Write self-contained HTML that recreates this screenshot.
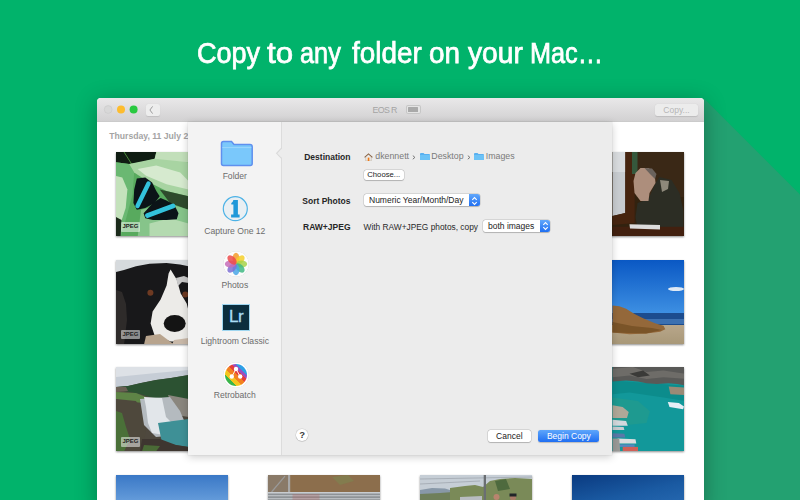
<!DOCTYPE html>
<html><head><meta charset="utf-8">
<style>
*{margin:0;padding:0;box-sizing:border-box}
html,body{width:800px;height:500px;overflow:hidden}
body{position:relative;background:#01b36b;font-family:"Liberation Sans",sans-serif}
.abs{position:absolute}
#shadow{position:absolute;left:0;top:0;width:800px;height:500px}
#title{position:absolute;left:0;top:33.1px;width:800px;height:40px;color:#fff;font-size:29.5px;line-height:40px;white-space:nowrap;-webkit-text-stroke:.75px #fff}
#title span{position:absolute;top:0;transform-origin:0 0}
#win{position:absolute;left:96.5px;top:98px;width:607px;height:410px;background:#fff;border-radius:4px 4px 0 0;overflow:hidden;box-shadow:0 4px 22px rgba(0,0,0,.3)}
#tb{position:absolute;left:0.5px;top:0;width:606.5px;height:24px;background:linear-gradient(#e9e8e9,#d2d1d2);border-bottom:1px solid #cbcbcb}
.tl{position:absolute;top:7.5px;width:8px;height:8px;border-radius:50%}
#date{position:absolute;left:109.3px;top:130.8px;font-size:8.65px;font-weight:bold;color:#a4a4a4;white-space:nowrap}
.ph{position:absolute;width:112.8px;height:84.4px;box-shadow:0 .5px 2px rgba(0,0,0,.45);overflow:hidden}
.ph svg{position:absolute;left:0;top:0;width:113px;height:84.5px;filter:blur(.6px)}
.badge{position:absolute;left:5.2px;top:70.2px;width:19.4px;height:9.6px;background:rgba(255,255,255,.5);border-radius:1px;color:#222;font-size:6px;line-height:9.6px;text-align:center;font-weight:bold}
#pop{position:absolute;left:187.5px;top:122px;width:424.3px;height:332.7px;background:#ececec;box-shadow:0 2px 8px rgba(0,0,0,.2),0 0 0 .5px rgba(0,0,0,.06)}
#side{position:absolute;left:0;top:0;width:94.7px;height:332.7px;background:#f3f3f3;border-right:1px solid #dcdcdc}
.sl{position:absolute;left:-1.2px;width:97px;text-align:center;font-size:8.6px;color:#6c6c6c;white-space:nowrap}
.lbl{position:absolute;font-size:8.5px;font-weight:bold;color:#262626;white-space:nowrap;text-align:right;width:80px}
.txt{position:absolute;font-size:8.5px;color:#2a2a2a;white-space:nowrap}
.gray{color:#7a7a7a}
.btn{position:absolute;background:#fff;border-radius:2.5px;box-shadow:0 0 0 .5px rgba(0,0,0,.16),0 .5px 1px rgba(0,0,0,.18);font-size:8px;color:#222;white-space:nowrap}
.step{position:absolute;right:0;top:0;bottom:0;width:10.5px;background:linear-gradient(#62a8fb,#1f6ff2);border-radius:0 2.5px 2.5px 0}
.step svg{position:absolute;left:2px;top:1.5px}
</style></head><body>
<svg id="shadow" width="800" height="500"><polygon points="703.5,98 800,194.5 800,500 703.5,500" fill="#23a171"/></svg>
<div id="title"><span style="left:197.48px;transform:scaleX(0.9162)">Copy</span><span style="left:267.20px;transform:scaleX(1.0583)">to</span><span style="left:300.14px;transform:scaleX(0.8574)">any</span><span style="left:351.50px;transform:scaleX(0.9446)">folder</span><span style="left:428.55px;transform:scaleX(0.9452)">on</span><span style="left:467.50px;transform:scaleX(0.9544)">your</span><span style="left:530.49px;transform:scaleX(0.8562)">Mac…</span></div>
<div id="win">
  <div id="tb">
    <svg class="abs" style="left:0;top:0" width="45" height="24"><circle cx="11.2" cy="11.5" r="3.9" fill="#d8d8d8" stroke="#c8c8c8" stroke-width=".6"/><circle cx="24" cy="11.5" r="4" fill="#fdbc2e"/><circle cx="36.6" cy="11.5" r="4" fill="#29c940"/></svg>
    <div class="abs" style="left:49px;top:6px;width:13.6px;height:12px;background:#ededed;border-radius:2px;box-shadow:0 .5px 1px rgba(0,0,0,.1)">
      <svg class="abs" style="left:0;top:0" width="14" height="12"><polyline points="6.6,2.4 3.9,6 6.6,9.6" fill="none" stroke="#8c8c8c" stroke-width="0.85"/></svg>
    </div>
    <div class="abs" style="left:275.5px;top:6.8px;font-size:8.8px;letter-spacing:-0.6px;color:#a4a4a4">EOS R</div>
    <div class="abs" style="left:308.5px;top:7px;width:15.5px;height:8.5px;border-radius:2px;background:#e4e4e4;box-shadow:inset 0 0 0 1px #c6c6c6"><div class="abs" style="left:2px;top:2px;width:10.5px;height:4.5px;background:#a9a9a9;border-radius:.5px"></div></div>
    <div class="abs" style="left:558px;top:6px;width:43px;height:12px;background:#ececec;border-radius:2.5px;box-shadow:0 .5px 1px rgba(0,0,0,.12);font-size:8.5px;line-height:12px;color:#b6b6b6;text-align:center">Copy...</div>
  </div>
</div>
<div id="date">Thursday, 11 July 2019</div>
<div class="ph" style="left:115.5px;top:152px"><svg viewBox="0 0 113 84.5" preserveAspectRatio="none">
<rect width="113" height="84.5" fill="#58aa5e"/>
<polygon points="-0.5,0.0 40.3,0.0 38.6,6.8 25.0,10.2 13.1,11.9 -0.5,10.2" fill="#0f1c12"/>
<line x1="8" y1="0" x2="22" y2="22" stroke="#4a8a3a" stroke-width="1"/>
<polygon points="40.3,0.0 72.5,0.0 72.5,10.2 50.5,10.2 38.6,6.8" fill="#c2dfba"/>
<polygon points="-0.5,10.2 13.1,11.9 18.2,20.4 16.5,42.5 9.7,68.0 4.6,85.0 -0.5,85.0" fill="#6ab872"/>
<polygon points="-0.5,23.8 6.3,25.5 11.4,37.4 9.7,56.1 4.6,71.4 -0.5,68.0" fill="#c4e2bc"/>
<polygon points="13.1,11.9 38.6,6.8 72.5,10.2 72.5,44.2 50.5,39.1 33.5,30.6 18.2,20.4" fill="#a8d4a2"/>
<polygon points="21.6,17.0 40.3,13.6 64.2,20.4 72.5,28.9 72.5,37.4 50.5,32.3 30.1,23.8" fill="#d6eacf"/>
<polygon points="43.7,37.4 72.5,44.2 72.5,57.8 53.9,51.0" fill="#2e4a2c"/>
<polygon points="25.0,57.8 50.5,51.0 72.5,57.8 72.5,85.0 21.6,85.0" fill="#86c48a"/>
<polygon points="33.5,71.4 53.9,66.3 72.5,71.4 72.5,85.0 33.5,85.0" fill="#b4dab0"/>
<polygon points="-0.5,64.6 5.5,68.0 4.6,85.0 -0.5,85.0" fill="#1a2a1a"/>
<polygon points="20.8,26.4 29.3,25.5 36.1,30.6 40.3,39.1 43.7,44.2 38.6,51.0 29.3,56.1 20.8,57.8 17.4,51.0 18.2,37.4" fill="#0b1418"/>
<polygon points="27.6,61.2 36.9,51.0 44.6,45.9 50.5,48.5 58.2,52.7 62.5,61.2 60.8,67.2 50.5,68.0 36.9,68.0 29.3,66.3" fill="#0b1418"/>
<line x1="32.5" y1="31.5" x2="21.5" y2="54" stroke="#33c2dc" stroke-width="4.4" stroke-linecap="round"/>
<line x1="31.5" y1="63.5" x2="57" y2="54" stroke="#33c2dc" stroke-width="4.8" stroke-linecap="round"/>
</svg><div class="badge">JPEG</div></div>
<div class="ph" style="left:571.5px;top:152px"><svg viewBox="0 0 113 84.5" preserveAspectRatio="none">
<rect width="113" height="84.5" fill="#32220f"/>
<rect x="64" y="0" width="49" height="45" fill="#3a2816"/>
<polygon points="40.5,0 53.3,0 53.3,61 40.5,64" fill="#c8ccd0"/>
<rect x="40.5" y="0" width="12.8" height="20" fill="#d8dbde"/>
<polygon points="53.3,0 62.6,0 62.6,71 40.5,73 40.5,64 53.3,61" fill="#46240f"/>
<rect x="60" y="0" width="5.5" height="22" fill="#35583c"/>
<polygon points="65.5,51.0 76.5,47.0 82.5,33.0 87.5,25.0 99.5,28.0 107.5,41.0 111.5,59.0 111.5,77.0 65.5,77.0 63.5,65.0" fill="#2c2d24"/>
<polygon points="63.5,21.0 68.5,16.0 76.5,16.0 82.5,21.0 83.5,31.0 77.5,41.0 76.5,49.0 68.5,49.0 62.5,41.0 61.5,29.0" fill="#ad8e7c"/>
<polygon points="72.5,16 80,16.5 84.5,22 83,27 78,22" fill="#6a625c"/>
<polygon points="88,28 97,29 96,37 90,40" fill="#8e887a"/>
<rect x="40.5" y="74.8" width="72.5" height="10" fill="#42200f"/>
<polygon points="57.5,72.3 88,73 88,77.4 58,76.5" fill="#dcdcdc"/>
</svg></div>
<div class="ph" style="left:115.5px;top:259.5px"><svg viewBox="0 0 113 84.5" preserveAspectRatio="none">
<rect width="113" height="84.5" fill="#18181a"/>
<polygon points="0,0 113,0 113,3 72.5,6.3 64,4.6 50.5,2.9 33.5,3.8 20,6.3 8,10 0,12" fill="#d6dadd"/>
<polygon points="0,30 6,32 10,44 11,60 8,84.5 0,84.5" fill="#2e2b2a"/>
<polygon points="54.6,9.5 60.7,19.5 64.7,33.5 70.7,43.5 72.7,51.5 72.7,81.5 54.6,81.5 38.6,75.5 34.6,63.5 36.6,51.5 44.6,39.5 50.6,25.5 52.6,13.5" fill="#ecebe8"/>
<polygon points="60,18 68,16 72.7,18 72.7,23 66,22 62,26" fill="#c8c8c8"/>
<polygon points="30,76 44,74 58,84.5 28,84.5" fill="#b8a48e"/>
<polygon points="58,80 72.7,78 72.7,84.5 56,84.5" fill="#c8b8a8"/>
<ellipse cx="58.7" cy="63.5" rx="11" ry="8.5" fill="#141414"/>
<circle cx="34.4" cy="32.7" r="3" fill="#6e3a22"/>
<circle cx="69.3" cy="34.4" r="3" fill="#6e3a22"/>
</svg><div class="badge">JPEG</div></div>
<div class="ph" style="left:571.5px;top:259.5px"><svg viewBox="0 0 113 84.5" preserveAspectRatio="none">
<defs><linearGradient id="skyg" x1="0" y1="0" x2="0" y2="1"><stop offset="0" stop-color="#0a58c4"/><stop offset="1" stop-color="#3d8fe2"/></linearGradient>
<linearGradient id="sandg" x1="0" y1="0" x2="0" y2="1"><stop offset="0" stop-color="#b8a68a"/><stop offset="1" stop-color="#a89878"/></linearGradient></defs>
<rect width="113" height="53" fill="url(#skyg)"/>
<rect x="0" y="53" width="113" height="12.5" fill="#1c4c8e"/>
<rect x="0" y="59" width="113" height="5" fill="#3c70b0"/>
<rect x="0" y="65" width="113" height="19.5" fill="url(#sandg)"/>
<polygon points="40.5,45.4 47.3,46.3 54.1,48.8 62.6,53.9 71.1,58.2 83.0,63.3 91.5,65.8 93.3,69.2 88.1,71.8 74.5,73.5 57.5,74.3 40.5,72.6" fill="#94683a"/>
<polygon points="40.5,62 60,66 80,68 90,70 74,73.5 40.5,72.6" fill="#7a5428"/>
<ellipse cx="104" cy="29" rx="8" ry="2" fill="#dfe9f4"/>
</svg></div>
<div class="ph" style="left:115.5px;top:367px"><svg viewBox="0 0 113 84.5" preserveAspectRatio="none">
<rect width="113" height="84.5" fill="#4e483e"/>
<polygon points="0,0 72.7,0 72.7,8 55,11 40,13 25,16 12,19 0,20" fill="#c6cdd6"/>
<polygon points="0,0 72.7,0 72.7,3 40,6 10,9 0,10" fill="#dde1e6"/>
<polygon points="0,20 12,19 25,16 40,13 55,11 72.7,8 72.7,44 56,40 40,32 24,27 8,24 0,24" fill="#2c5232"/>
<polygon points="0,20 10,20 12,24 0,25" fill="#6a6054"/>
<polygon points="0,25 20,26 30,30 28,36 6,34 0,32" fill="#5e8446"/>
<polygon points="0,32 20,34 28,48 30,64 26,84.5 0,84.5" fill="#4e483c"/>
<polygon points="0,44 6,46 10,60 14,72 8,84.5 0,84.5" fill="#4a7038"/>
<polygon points="52,28 72.7,32 72.7,50 60,48" fill="#8a867e"/>
<polygon points="24,32 54,30 64,44 70,58 62,68 40,70 28,58" fill="#b4babf"/>
<polygon points="28,30 46,31 50,50 58,58 62,66 48,68 36,66 32,56 30,40" fill="#e2e6ea"/>
<polygon points="42,56 72.7,52 72.7,80 46,76" fill="#3e9096"/>
<polygon points="26,72 44,72 60,78 72.7,80 72.7,84.5 24,84.5" fill="#3e3630"/>
<polygon points="28,78 44,79 40,84.5 26,84.5" fill="#4a6a36"/>
</svg><div class="badge">JPEG</div></div>
<div class="ph" style="left:571.5px;top:367px"><svg viewBox="0 0 113 84.5" preserveAspectRatio="none">
<rect width="113" height="84.5" fill="#12989a"/>
<polygon points="40.5,30.6 66.0,34.0 77.9,44.2 74.5,56.1 57.5,57.8 40.5,54.4" fill="#1e9a90"/>
<polygon points="40.5,13.6 113.5,18.7 113.5,34.0 91.5,30.6 57.5,25.5 40.5,27.2" fill="#0c8c8c"/>
<polygon points="40.5,0.0 113.5,0.0 113.5,18.7 105.2,17.0 96.7,16.2 84.7,17.0 74.5,16.2 66.0,14.5 54.1,13.6 40.5,14.5" fill="#595957"/>
<polygon points="40.5,1.7 60.9,0.0 74.5,5.1 91.5,3.4 113.5,6.8 113.5,11.9 91.5,10.2 74.5,11.9 57.5,8.5 40.5,10.2" fill="#6e6c68"/>
<polygon points="57.5,6.8 71.1,3.4 77.9,8.5 66.0,10.2" fill="#3a3a38"/>
<polygon points="96.7,19.6 112.0,20.4 112.0,28.1 98.4,27.2" fill="#9a8a76"/>
<polygon points="95.8,34.9 106.9,36.1 112.0,39.5 111.1,42.2 97.5,40.0" fill="#e6eef6"/>
<polygon points="40.5,38.3 50.7,40.0 56.7,45.1 55.0,51.0 40.5,51.0" fill="#b0a898"/>
<polygon points="40.5,52.7 54.1,54.1 55.8,58.7 40.5,58.7" fill="#d4d8dc"/>
<polygon points="40.5,59.5 51.6,59.9 52.4,62.9 40.5,62.9" fill="#c8ccd0"/>
<polygon points="40.5,66.3 52.4,66.7 53.3,70.6 40.5,70.6" fill="#5a78a8"/>
<polygon points="45.6,71.4 63.5,72.3 64.3,76.5 46.5,76.5" fill="#dcdee0"/>
<polygon points="47.3,77.4 62.6,77.4 62.6,79.9 47.3,79.9" fill="#5888c0"/>
<polygon points="50.7,79.9 66.0,79.9 66.0,85.0 50.7,85.0" fill="#d06058"/>
<polygon points="40.5,71.4 47.3,71.4 48.2,85.0 40.5,85.0" fill="#9a9a98"/>
</svg></div>
<div class="ph" style="left:115.5px;top:474.5px"><svg viewBox="0 0 113 84.5" preserveAspectRatio="none">
<defs><linearGradient id="b1g" x1="0" y1="0" x2="0" y2="1"><stop offset="0" stop-color="#3a78c6"/><stop offset=".32" stop-color="#669ddb"/><stop offset="1" stop-color="#8ab8e8"/></linearGradient></defs>
<rect width="113" height="84.5" fill="url(#b1g)"/>
</svg></div>
<div class="ph" style="left:267.5px;top:474.5px"><svg viewBox="0 0 113 84.5" preserveAspectRatio="none">
<rect width="113" height="84.5" fill="#8e9296"/>
<rect width="113" height="17" fill="#8c6e4c"/>
<polygon points="0,0 20,0 20,17 0,17" fill="#8a7a68"/>
<polygon points="64,2 80,0 86,6 72,10" fill="#7a8a50" opacity=".5"/>
<line x1="17" y1="1.2" x2="3.5" y2="17" stroke="#9a9a9a" stroke-width="1.2"/>
<rect x="20" y="0" width="2.2" height="17" fill="#a8a8a8"/>
<rect y="17" width="113" height="1.5" fill="#c8ccd0"/>
<rect y="20" width="113" height="1.3" fill="#b8bcc0"/>
<rect y="23" width="113" height="1.3" fill="#b8bcc0"/>
<rect x="24.5" y="19" width="27" height="6" fill="#b06060" opacity=".3"/>
</svg></div>
<div class="ph" style="left:419.5px;top:474.5px"><svg viewBox="0 0 113 84.5" preserveAspectRatio="none">
<rect width="113" height="84.5" fill="#c6ced6"/>
<polygon points="0,15 12,13 25,13.5 33,16 33,30 0,30" fill="#8898a8"/>
<polygon points="0,19 20,18 33,17 33,30 0,30" fill="#6f7f5a"/>
<polygon points="30,13 45,11 55,10 63,12 70,6 80,4 95,3 113,4 113,84.5 30,84.5" fill="#7a8a58"/>
<polygon points="75,6 86,4 90,14 78,16" fill="#4e6a3e"/>
<line x1="0" y1="4" x2="113" y2="2" stroke="#8a9098" stroke-width=".5"/>
<line x1="0" y1="9" x2="60" y2="6" stroke="#8a9098" stroke-width=".5"/>
<rect x="63.7" y="0" width="2.3" height="30" fill="#6a6e72"/>
<polygon points="40,22 62,21 62,26 40,26" fill="#b8bcc0"/>
<circle cx="76.5" cy="22" r="3" fill="#b8846e"/>
<circle cx="93" cy="22.5" r="3" fill="#a87a66"/>
<rect x="89.5" y="18.5" width="7" height="3" fill="#202428"/>
</svg></div>
<div class="ph" style="left:571.5px;top:474.5px"><svg viewBox="0 0 113 84.5" preserveAspectRatio="none">
<defs><linearGradient id="b4g" x1="0" y1="0" x2="0.3" y2="1"><stop offset="0" stop-color="#0a3a80"/><stop offset=".35" stop-color="#1a5aa2"/><stop offset="1" stop-color="#3a80c8"/></linearGradient></defs>
<rect width="113" height="84.5" fill="url(#b4g)"/>
</svg></div>

<div id="pop">
  <div id="side">
    <svg class="abs" style="left:32px;top:18px" width="34" height="27" viewBox="0 0 34 27">
      <path d="M1.5,3.5 Q1.5,1.5 3.5,1.5 L11.5,1.5 L14,4.5 L30,4.5 Q32.2,4.5 32.2,6.7 L32.2,23.5 Q32.2,25.5 30.2,25.5 L3.5,25.5 Q1.5,25.5 1.5,23.5 Z" fill="#7ac8fb" stroke="#5f90ee" stroke-width="1.5"/>
      <path d="M2.3,7.6 L31.4,7.6" stroke="#9fd8fc" stroke-width="0.9"/>
    </svg>
    <div class="sl" style="top:48.5px">Folder</div>
    <svg class="abs" style="left:34.5px;top:72.5px" width="28" height="28" viewBox="0 0 28 28">
      <circle cx="13.3" cy="13.7" r="12" fill="#e9eff3" stroke="#4cb2e6" stroke-width="1.2"/>
      <path d="M11.4,4.9 L15.9,4.9 L15.9,19.6 L17.6,19.6 L17.6,22.5 L9.1,22.5 L9.1,19.6 L11.4,19.6 L11.4,9.4 L9.3,9.6 L9.3,8 Q10.8,7.2 11.4,4.9 Z" fill="#1f98d9"/>
    </svg>
    <div class="sl" style="top:103.5px">Capture One 12</div>
    <svg class="abs" style="left:34.5px;top:127.5px;filter:drop-shadow(0 .5px .7px rgba(0,0,0,.22))" width="28" height="28" viewBox="0 0 28 28">
      <circle cx="14" cy="14" r="12.8" fill="#fcfcfc"/>
      <g transform="translate(14 14)" style="mix-blend-mode:normal"><ellipse cx="0" cy="-5.6" rx="3.5" ry="5.6" fill="#f39a2a" opacity=".85" transform="rotate(0)"/><ellipse cx="0" cy="-5.6" rx="3.5" ry="5.6" fill="#f5cf2a" opacity=".85" transform="rotate(45)"/><ellipse cx="0" cy="-5.6" rx="3.5" ry="5.6" fill="#a6d24a" opacity=".85" transform="rotate(90)"/><ellipse cx="0" cy="-5.6" rx="3.5" ry="5.6" fill="#3fb883" opacity=".85" transform="rotate(135)"/><ellipse cx="0" cy="-5.6" rx="3.5" ry="5.6" fill="#4aa6e6" opacity=".85" transform="rotate(180)"/><ellipse cx="0" cy="-5.6" rx="3.5" ry="5.6" fill="#7d70d4" opacity=".85" transform="rotate(225)"/><ellipse cx="0" cy="-5.6" rx="3.5" ry="5.6" fill="#c56cb8" opacity=".85" transform="rotate(270)"/><ellipse cx="0" cy="-5.6" rx="3.5" ry="5.6" fill="#ec4b4b" opacity=".85" transform="rotate(315)"/></g>
    </svg>
    <div class="sl" style="top:158px">Photos</div>
    <div class="abs" style="left:34.5px;top:181.8px;width:28px;height:27.5px;background:#0b2e3e;border:1px solid #9fd6f0">
      <div class="abs" style="left:0;top:2px;width:26px;text-align:center;font-size:17px;line-height:20px;color:#a9def5;letter-spacing:-0.5px;-webkit-text-stroke:.3px #a9def5">Lr</div>
    </div>
    <div class="sl" style="top:213.5px">Lightroom Classic</div>
    <svg class="abs" style="left:34.5px;top:238.6px;filter:drop-shadow(0 .5px .7px rgba(0,0,0,.22))" width="28" height="28" viewBox="0 0 28 28">
      <defs><linearGradient id="rbg" x1="0.12" y1="0.88" x2="0.88" y2="0.12">
        <stop offset="0" stop-color="#3ab54a"/><stop offset=".2" stop-color="#3ab54a"/><stop offset=".2" stop-color="#f4c51c"/><stop offset=".38" stop-color="#f4c51c"/><stop offset=".38" stop-color="#f2811f"/><stop offset=".54" stop-color="#f2811f"/><stop offset=".54" stop-color="#e53d3a"/><stop offset=".68" stop-color="#e53d3a"/><stop offset=".68" stop-color="#9b4fbf"/><stop offset=".82" stop-color="#9b4fbf"/><stop offset=".82" stop-color="#2d9fe6"/><stop offset="1" stop-color="#2d9fe6"/></linearGradient></defs>
      <circle cx="14" cy="14" r="12.8" fill="#fff"/>
      <circle cx="14" cy="14" r="11" fill="url(#rbg)"/>
      <path d="M14,8 L9.8,15.5 M14,8 L18.2,15.5" stroke="#fff" stroke-width="0.9"/>
      <circle cx="14" cy="8" r="2.2" fill="#fff"/>
      <circle cx="9.8" cy="15.5" r="2.2" fill="#fff"/>
      <circle cx="18.2" cy="15.5" r="2.2" fill="#fff"/>
    </svg>
    <div class="sl" style="top:268px">Retrobatch</div>
  </div>
  <svg class="abs" style="left:84.7px;top:22px" width="14" height="18"><polygon points="9.8,4.4 4.6,9.3 9.8,14.1 10.8,14.1 10.8,4.4" fill="#ececec"/><polyline points="9.5,4.1 4.6,9.3 9.5,14.4" fill="none" stroke="#d9d9d9" stroke-width="1.1"/></svg>
  <div class="lbl" style="left:83px;top:30px">Destination</div>
  <svg class="abs" style="left:176px;top:30.5px" width="9" height="8.5" viewBox="0 0 9 8.5">
    <path d="M1.8,4 L1.8,8 L7.2,8 L7.2,4" fill="#f4efe8" stroke="#b0a090" stroke-width=".5"/>
    <path d="M0.6,4.4 L4.5,0.9 L8.4,4.4" fill="none" stroke="#8a6446" stroke-width="1.1"/>
    <rect x="3.7" y="4.6" width="1.7" height="3.4" fill="#ee7a1a"/>
  </svg>
  <div class="txt gray" style="left:187.8px;top:29.3px;font-size:8.8px">dkennett</div>
  <svg class="abs" style="left:224.8px;top:32.6px" width="4" height="5"><polyline points="0.8,0.6 2.9,2.4 0.8,4.2" fill="none" stroke="#6e6e6e" stroke-width="0.95"/></svg>
  <svg class="abs" style="left:232px;top:30.8px" width="10" height="7" viewBox="0 0 10 7"><path d="M0,1 Q0,0 1,0 L3.5,0 L4.5,1 L9,1 Q10,1 10,2 L10,6.3 Q10,7 9.3,7 L0.7,7 Q0,7 0,6.3 Z" fill="#58b0f0"/><rect x="0" y="2" width="10" height="5" fill="#6cc2f6"/></svg>
  <div class="txt gray" style="left:243.8px;top:29.3px;font-size:8.8px">Desktop</div>
  <svg class="abs" style="left:279.3px;top:32.6px" width="4" height="5"><polyline points="0.8,0.6 2.9,2.4 0.8,4.2" fill="none" stroke="#6e6e6e" stroke-width="0.95"/></svg>
  <svg class="abs" style="left:286.5px;top:30.8px" width="10" height="7" viewBox="0 0 10 7"><path d="M0,1 Q0,0 1,0 L3.5,0 L4.5,1 L9,1 Q10,1 10,2 L10,6.3 Q10,7 9.3,7 L0.7,7 Q0,7 0,6.3 Z" fill="#58b0f0"/><rect x="0" y="2" width="10" height="5" fill="#6cc2f6"/></svg>
  <div class="txt gray" style="left:298.3px;top:29.3px;font-size:8.8px">Images</div>
  <div class="btn" style="left:176px;top:47.7px;width:40.5px;height:10.8px;font-size:7.7px;line-height:10.8px;text-align:center">Choose...</div>
  <div class="lbl" style="left:83px;top:73.5px">Sort Photos</div>
  <div class="btn" style="left:176.5px;top:72px;width:115.7px;height:12.3px;font-size:8.5px;line-height:12.3px;padding-left:5px">Numeric Year/Month/Day<div class="step"><svg width="7" height="10"><polyline points="1.3,3.8 3.5,1.6 5.7,3.8" fill="none" stroke="#fff" stroke-width="1.1"/><polyline points="1.3,6.2 3.5,8.4 5.7,6.2" fill="none" stroke="#fff" stroke-width="1.1"/></svg></div></div>
  <div class="lbl" style="left:83px;top:100px">RAW+JPEG</div>
  <div class="txt" style="left:176px;top:100.2px;font-size:8.35px">With RAW+JPEG photos, copy</div>
  <div class="btn" style="left:295.5px;top:97.8px;width:67.3px;height:12.4px;font-size:8.5px;line-height:12.4px;padding-left:5px">both images<div class="step"><svg width="7" height="10"><polyline points="1.3,3.8 3.5,1.6 5.7,3.8" fill="none" stroke="#fff" stroke-width="1.1"/><polyline points="1.3,6.2 3.5,8.4 5.7,6.2" fill="none" stroke="#fff" stroke-width="1.1"/></svg></div></div>
  <div class="abs" style="left:108.9px;top:307.4px;width:11.6px;height:11.6px;border-radius:50%;background:#fff;box-shadow:0 0 0 .5px rgba(0,0,0,.12),0 .5px 1px rgba(0,0,0,.16);font-size:9.5px;line-height:11.8px;text-align:center;font-weight:bold;color:#3a3a3a">?</div>
  <div class="btn" style="left:300.3px;top:307.8px;width:43px;height:12px;font-size:8.5px;line-height:12px;text-align:center">Cancel</div>
  <div class="btn" style="left:350.8px;top:307.5px;width:61.2px;height:12.3px;font-size:8.5px;line-height:12.3px;text-align:center;color:#fff;background:linear-gradient(#5ea6fb,#1f6ef2);box-shadow:0 .5px 1px rgba(0,0,0,.2)">Begin Copy</div>
</div>
</body></html>
